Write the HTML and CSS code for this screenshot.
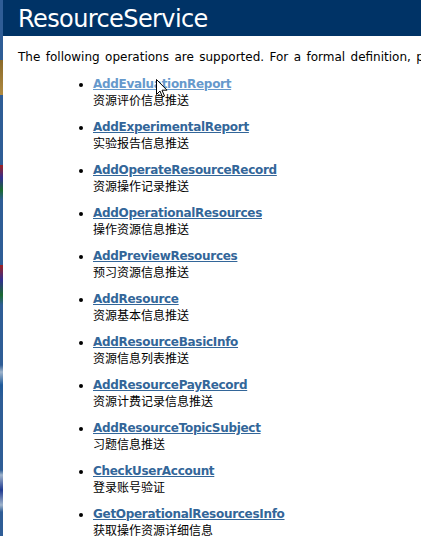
FILE: index.html
```
<!DOCTYPE html>
<html>
<head>
<meta charset="utf-8">
<link rel="stylesheet" href="styles.css">
</head>
<body>
<div class="screen">
  <div class="desk"></div>
  <div class="page">
    <h1 class="heading1">ResourceService</h1>
    <div class="content">
      <p class="intro">The following operations are supported. For a formal definition, please review the Service Description.</p>
      <ul class="ops">
        <li><a class="visited" href="#">AddEvaluationReport</a><span class="desc">资源评价信息推送</span></li>
        <li><a href="#">AddExperimentalReport</a><span class="desc">实验报告信息推送</span></li>
        <li><a href="#">AddOperateResourceRecord</a><span class="desc">资源操作记录推送</span></li>
        <li><a href="#">AddOperationalResources</a><span class="desc">操作资源信息推送</span></li>
        <li><a href="#">AddPreviewResources</a><span class="desc">预习资源信息推送</span></li>
        <li><a href="#">AddResource</a><span class="desc">资源基本信息推送</span></li>
        <li><a href="#">AddResourceBasicInfo</a><span class="desc">资源信息列表推送</span></li>
        <li><a href="#">AddResourcePayRecord</a><span class="desc">资源计费记录信息推送</span></li>
        <li><a href="#">AddResourceTopicSubject</a><span class="desc">习题信息推送</span></li>
        <li><a href="#">CheckUserAccount</a><span class="desc">登录账号验证</span></li>
        <li><a href="#">GetOperationalResourcesInfo</a><span class="desc">获取操作资源详细信息</span></li>
      </ul>
    </div>
  </div>
</div>
<svg class="cursor" width="12" height="19" viewBox="0 0 12 19"><path d="M0.5 0.5 L0.5 15.5 L4 12 L6.5 18 L8.5 17 L6 11.2 L11 11.2 Z" fill="#fff" stroke="#000" stroke-width="1"/></svg>
</body>
</html>
```
FILE: styles.css
```
html, body {
  margin: 0;
  padding: 0;
  background: #ffffff;
  overflow: hidden;
}
.screen {
  display: flex;
  width: 421px;
  height: 536px;
  overflow: hidden;
}
.desk {
  flex: 0 0 3px;
  background:
    linear-gradient(to bottom,
      #2f5d96 0, #2f5d96 60px, #8a6a2a 60px, #b08a40 95px, #2f5d96 95px,
      #2f5d96 165px, #a02020 165px, #303090 178px, #1a6a30 190px, #2f5d96 200px,
      #2f5d96 265px, #a02020 265px, #303090 280px, #1a6a30 295px, #2f5d96 305px,
      #2f5d96 365px, #9fb4cc 372px, #1f5a9a 385px, #2f5d96 400px,
      #2f5d96 470px, #9fb4cc 475px, #1f3a90 490px, #9fb4cc 505px, #2f5d96 512px);
}
.page {
  flex: 1;
  min-width: 0;
  font-family: "DejaVu Sans", Verdana, sans-serif;
  color: #000;
}
.heading1 {
  margin: 0;
  background: #003366;
  color: #fff;
  font-family: "DejaVu Sans", Tahoma, sans-serif;
  font-weight: normal;
  font-size: 24px;
  line-height: 26px;
  padding: 6px 0 4px 15px;
  white-space: nowrap;
  letter-spacing: -0.6px;
}
.content {
  padding-left: 15px;
  font-size: 12px;
}
.intro {
  margin: 14px 0 0 0;
  line-height: 14px;
  white-space: nowrap;
  word-spacing: 1.6px;
}
.ops {
  margin: 6px 0 0 0;
  padding-left: 75px;
  list-style: disc;
}
.ops li {
  margin-top: 13px;
  line-height: 15px;
  white-space: nowrap;
}
.ops a {
  font-size: 12px;
  color: #336699;
  font-weight: bold;
  text-decoration: underline;
  letter-spacing: -0.3px;
}
.ops a.visited {
  color: #6699cc;
}
.desc {
  display: block;
  font-family: "Noto Sans CJK SC", sans-serif;
  font-size: 12px;
  line-height: 15px;
  color: #000;
}
.cursor {
  position: absolute;
  left: 156px;
  top: 79px;
}
```
